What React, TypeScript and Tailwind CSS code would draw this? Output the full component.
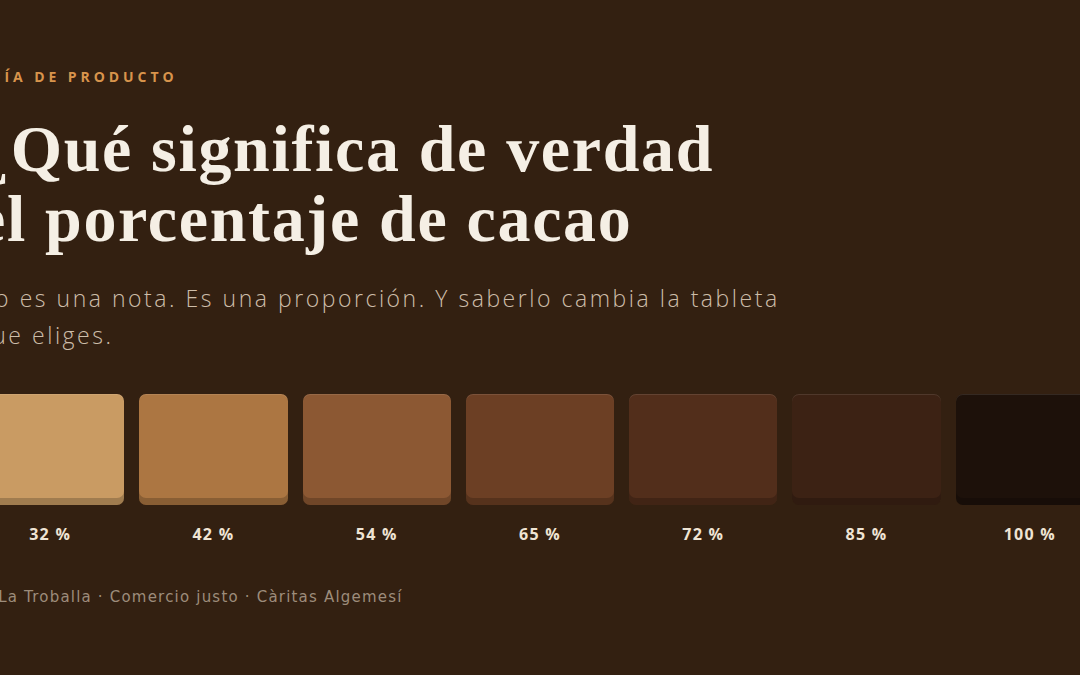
import React from "react";

const swatches = [
  { pct: "32 %", color: "bg-[#c99b63]" },
  { pct: "42 %", color: "bg-[#ac7642]" },
  { pct: "54 %", color: "bg-[#8c5833]" },
  { pct: "65 %", color: "bg-[#6c3f24]" },
  { pct: "72 %", color: "bg-[#522e1b]" },
  { pct: "85 %", color: "bg-[#3c2214]" },
  { pct: "100 %", color: "bg-[#1d110a]" },
];

export default function App() {
  return (
    <div className="w-full h-[675px] bg-[#332011] flex justify-center overflow-hidden">
      <div className="w-[1128px] shrink-0 flex flex-col pt-[68px] font-['Open_Sans',sans-serif]">
        <div className="text-[14px] font-bold tracking-[0.28em] text-[#d8944c] leading-[18px]">
          GUÍA DE PRODUCTO
        </div>
        <h1 className="mt-[28px] font-['Liberation_Serif',serif] font-bold text-[66px] tracking-[0.025em] leading-[70px] text-[#f5efe5]">
          ¿Qué significa de verdad
          <br />
          el porcentaje de cacao
        </h1>
        <p className="mt-[26px] max-w-[820px] text-[23px] font-light tracking-[0.11em] leading-[37px] text-[#cdbda9]">
          No es una nota. Es una proporción. Y saberlo cambia la tableta que eliges.
        </p>
        <div className="mt-[40px] grid grid-cols-7 gap-[15px]">
          {swatches.map((s) => (
            <div key={s.pct} className="flex flex-col items-center">
              <div
                className={`w-full h-[111px] rounded-[7px] ${s.color} shadow-[inset_0_-7px_0_rgba(0,0,0,0.2),inset_0_1px_0_rgba(255,255,255,0.1)]`}
              />
              <div className="mt-[19px] text-[16px] font-bold tracking-[0.08em] text-[#efe4d4] leading-[20px]">
                {s.pct}
              </div>
            </div>
          ))}
        </div>
        <div className="mt-[43px] font-['DejaVu_Sans',sans-serif] text-[15px] tracking-[0.08em] text-[#9d8c7b] leading-[20px]">
          — La Troballa · Comercio justo · Càritas Algemesí
        </div>
      </div>
    </div>
  );
}
